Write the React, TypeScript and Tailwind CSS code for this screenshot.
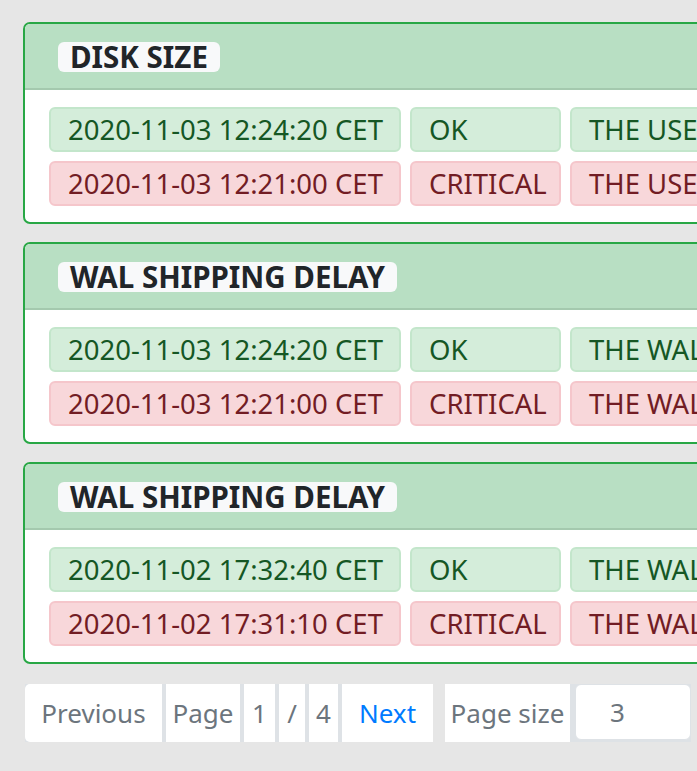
import React from "react";

type Event = { time: string; status: "OK" | "CRITICAL"; message: string };

const checks: { title: string; events: Event[] }[] = [
  {
    title: "DISK SIZE",
    events: [
      { time: "2020-11-03 12:24:20 CET", status: "OK", message: "THE USED DISK SPACE IS BELOW THE THRESHOLD" },
      { time: "2020-11-03 12:21:00 CET", status: "CRITICAL", message: "THE USED DISK SPACE IS ABOVE THE THRESHOLD" },
    ],
  },
  {
    title: "WAL SHIPPING DELAY",
    events: [
      { time: "2020-11-03 12:24:20 CET", status: "OK", message: "THE WAL SHIPPING DELAY IS BELOW THE THRESHOLD" },
      { time: "2020-11-03 12:21:00 CET", status: "CRITICAL", message: "THE WAL SHIPPING DELAY IS ABOVE THE THRESHOLD" },
    ],
  },
  {
    title: "WAL SHIPPING DELAY",
    events: [
      { time: "2020-11-02 17:32:40 CET", status: "OK", message: "THE WAL SHIPPING DELAY IS BELOW THE THRESHOLD" },
      { time: "2020-11-02 17:31:10 CET", status: "CRITICAL", message: "THE WAL SHIPPING DELAY IS ABOVE THE THRESHOLD" },
    ],
  },
];

function Cell({ ok, className, children }: { ok: boolean; className: string; children: React.ReactNode }) {
  const tone = ok
    ? "bg-[#d4edda] border-[#c3e6cb] text-[#155724]"
    : "bg-[#f8d7da] border-[#f5c6cb] text-[#721c24]";
  return (
    <div className={`h-[45px] shrink-0 flex items-center px-[17px] border-2 rounded-[6px] whitespace-nowrap overflow-hidden ${tone} ${className}`}>
      {children}
    </div>
  );
}

function CheckCard({ title, events }: { title: string; events: Event[] }) {
  return (
    <div className="w-[1100px] border-2 border-[#28a745] rounded-[7px] bg-white overflow-hidden">
      <div className="h-[66px] bg-[#b8dfc3] border-b-2 border-[#a4c9ae] flex items-center pl-[33px] pt-[2px]">
        <span className="h-[30px] flex items-center px-[12px] rounded-[6px] bg-[#f8f9fa] text-[#212529] text-[29.5px] font-bold leading-none">
          {title}
        </span>
      </div>
      <div className="pl-[24px] pt-[17px] pb-[16px] flex flex-col gap-[9px] text-[27.5px]">
        {events.map((e, i) => (
          <div className="flex gap-[9px]" key={i}>
            <Cell ok={e.status === "OK"} className="w-[352px]">{e.time}</Cell>
            <Cell ok={e.status === "OK"} className="w-[151px]">{e.status}</Cell>
            <Cell ok={e.status === "OK"} className="w-[560px]">{e.message}</Cell>
          </div>
        ))}
      </div>
    </div>
  );
}

export default function App() {
  return (
    <div
      className="w-full min-h-[771px] bg-[#e6e6e6] overflow-hidden pl-[23px] pt-[22px] text-[26px]"
      style={{ fontFamily: '"Noto Sans", "Open Sans", sans-serif' }}
    >
      <div className="flex flex-col gap-[18px]">
        {checks.map((c, i) => (
          <CheckCard key={i} title={c.title} events={c.events} />
        ))}
      </div>

      <div className="mt-[20px] pl-[2px] flex items-start gap-[12px] text-[#6c757d]">
        <div className="flex gap-[4px] bg-[#dee2e6] h-[58px]">
          <div className="bg-white rounded-l-[5px] w-[137px] flex items-center justify-center">Previous</div>
          <div className="bg-white w-[74px] flex items-center justify-center">Page</div>
          <div className="bg-white w-[31px] flex items-center justify-center">1</div>
          <div className="bg-white w-[26px] flex items-center justify-center">/</div>
          <div className="bg-white w-[29px] flex items-center justify-center">4</div>
          <div className="bg-white w-[91px] flex items-center justify-center text-[#007bff]">Next</div>
        </div>
        <div className="flex gap-[5px] bg-[#dee2e6] h-[58px] items-start">
          <div className="bg-white w-[125px] h-[58px] flex items-center justify-center">Page size</div>
          <div className="bg-white w-[116px] h-[56px] rounded-[6px] border border-[#dee2e6] flex items-center pl-[34px]">3</div>
        </div>
      </div>
    </div>
  );
}
